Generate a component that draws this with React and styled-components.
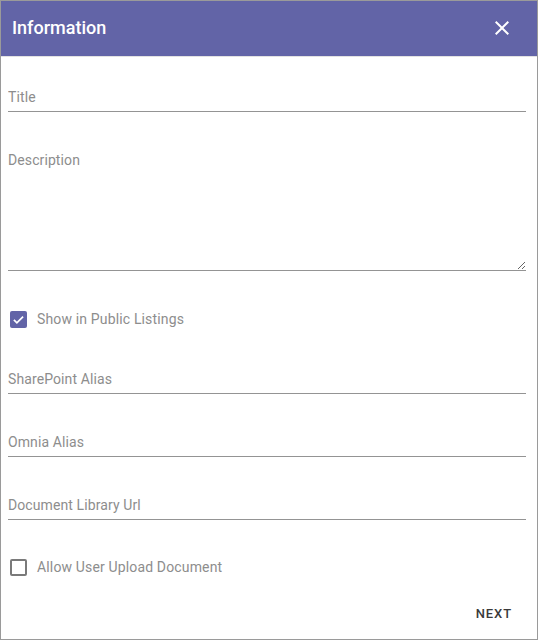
import React from "react";
import styled, { createGlobalStyle } from "styled-components";

const Global = createGlobalStyle`
  html, body { margin: 0; padding: 0; background: #fff; }
  body { font-family: Roboto, "Liberation Sans", Arial, sans-serif; }
  * { box-sizing: border-box; }
`;

const Frame = styled.div`
  width: 538px;
  height: 640px;
  border: 1px solid #9a9a9a;
  display: flex;
  flex-direction: column;
  background: #fff;
`;

const Header = styled.header`
  height: 56px;
  flex: none;
  background: #6264a7;
  border-bottom: 1px solid #e2e2e2;
  display: flex;
  align-items: center;
  justify-content: space-between;
  padding: 0 23px 2px 11px;
`;

const HeaderTitle = styled.h1`
  margin: 0;
  font-family: Roboto, "Liberation Sans", sans-serif;
  font-size: 18px;
  font-weight: 500;
  color: #fff;
  line-height: 24px;
`;

const CloseButton = styled.button`
  width: 24px;
  height: 24px;
  padding: 0;
  border: 0;
  background: transparent;
  color: #fff;
  display: flex;
  cursor: pointer;
`;

const Content = styled.div`
  flex: 1;
  display: flex;
  flex-direction: column;
  padding: 0 11px 0 7px;
`;

const Field = styled.div`
  margin-top: ${(p) => p.$gap}px;
`;

const TextInput = styled.input`
  display: block;
  width: 100%;
  border: 0;
  border-bottom: 1px solid #949494;
  padding: 0 0 4px;
  height: 25px;
  font-family: Roboto, "Liberation Sans", sans-serif;
  font-size: 14px;
  line-height: 20px;
  letter-spacing: 0.1px;
  color: #333;
  background: transparent;
  outline: none;
  &::placeholder { color: #8d8d8d; }
`;

const TextArea = styled.textarea`
  display: block;
  width: 100%;
  height: 121px;
  border: 0;
  border-bottom: 1px solid #949494;
  padding: 0 0 4px;
  font-family: Roboto, "Liberation Sans", sans-serif;
  font-size: 14px;
  line-height: 20px;
  letter-spacing: 0.1px;
  color: #333;
  background: transparent;
  outline: none;
  resize: vertical;
  &::placeholder { color: #8d8d8d; }
`;

const CheckRow = styled.label`
  margin-top: ${(p) => p.$gap}px;
  height: 20px;
  display: flex;
  align-items: center;
  gap: 10px;
  padding-left: 2px;
  font-family: Roboto, "Liberation Sans", sans-serif;
  font-size: 14px;
  line-height: 20px;
  letter-spacing: 0.15px;
  color: #8d8d8d;
  cursor: pointer;
`;

const Box = styled.span`
  width: 17px;
  height: 17px;
  flex: none;
  border-radius: 2px;
  display: flex;
  align-items: center;
  justify-content: center;
  background: ${(p) => (p.$checked ? "#6264a7" : "transparent")};
  border: ${(p) => (p.$checked ? "none" : "2px solid #7a7a7a")};
`;

const Footer = styled.div`
  margin-top: auto;
  display: flex;
  justify-content: flex-end;
  padding: 0 6px 7px;
`;

const TextButton = styled.button`
  height: 36px;
  padding: 8px 8px;
  border: 0;
  background: transparent;
  font-family: Roboto, "Liberation Sans", sans-serif;
  font-size: 13px;
  font-weight: 500;
  letter-spacing: 0.9px;
  line-height: 20px;
  color: #3a3a3a;
  text-transform: uppercase;
  cursor: pointer;
`;

const CloseIcon = () => (
  <svg width="24" height="24" viewBox="0 0 24 24" fill="currentColor">
    <path d="M19 6.41L17.59 5 12 10.59 6.41 5 5 6.41 10.59 12 5 17.59 6.41 19 12 13.41 17.59 19 19 17.59 13.41 12z" />
  </svg>
);

const Check = ({ checked, children, gap }) => (
  <CheckRow $gap={gap}>
    <Box $checked={checked}>
      {checked && (
        <svg width="13" height="13" viewBox="0 0 24 24">
          <path d="M3.5 12.5l5.5 5.5L20.5 6.5" fill="none" stroke="#fff" strokeWidth="3.2" />
        </svg>
      )}
    </Box>
    {children}
  </CheckRow>
);

export default function App() {
  return (
    <>
      <Global />
      <Frame>
        <Header>
          <HeaderTitle>Information</HeaderTitle>
          <CloseButton aria-label="Close">
            <CloseIcon />
          </CloseButton>
        </Header>
        <Content>
          <Field $gap={30}>
            <TextInput placeholder="Title" />
          </Field>
          <Field $gap={38}>
            <TextArea placeholder="Description" />
          </Field>
          <Check checked gap={38}>Show in Public Listings</Check>
          <Field $gap={40}>
            <TextInput placeholder="SharePoint Alias" />
          </Field>
          <Field $gap={38}>
            <TextInput placeholder="Omnia Alias" />
          </Field>
          <Field $gap={38}>
            <TextInput placeholder="Document Library Url" />
          </Field>
          <Check gap={37}>Allow User Upload Document</Check>
          <Footer>
            <TextButton>Next</TextButton>
          </Footer>
        </Content>
      </Frame>
    </>
  );
}
